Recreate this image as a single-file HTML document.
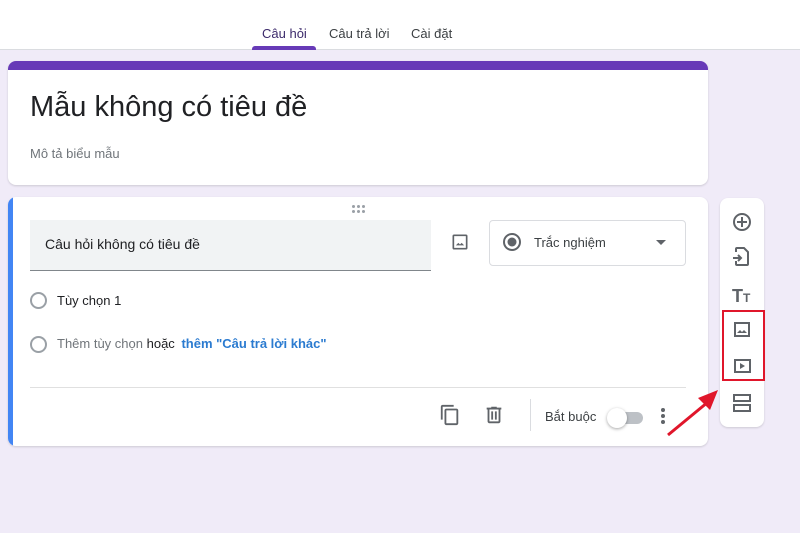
<!DOCTYPE html>
<html><head><meta charset="utf-8"><style>
*{margin:0;padding:0;box-sizing:border-box}
body{width:800px;height:533px;background:#f0ebf8;font-family:"Liberation Sans",sans-serif;position:relative;overflow:hidden;color:#202124}
.hdr{position:absolute;left:0;top:0;width:800px;height:50px;background:#fff;border-bottom:1px solid #dadce0}
.tab{position:absolute;top:26px;font-size:13px;color:#3c4043}
.card{position:absolute;background:#fff;border-radius:8px;box-shadow:0 1px 2px rgba(0,0,0,.15)}
.abs{position:absolute}
.d{position:absolute;width:3px;height:3px;background:#9aa0a6;border-radius:50%}
</style></head><body>
<div class="hdr">
<div class="tab" style="left:262px;color:#3c2a6b">Câu hỏi</div>
<div class="tab" style="left:329px">Câu trả lời</div>
<div class="tab" style="left:411px">Cài đặt</div>
<div class="abs" style="left:252px;top:46px;width:64px;height:4px;background:#673ab7;border-radius:3px 3px 0 0"></div>
</div>
<div class="card" style="left:8px;top:61px;width:700px;height:124px;overflow:hidden">
<div class="abs" style="left:0;top:0;width:700px;height:9px;background:#673ab7"></div>
<div class="abs" style="left:22px;top:30px;font-size:29px;color:#202124">Mẫu không có tiêu đề</div>
<div class="abs" style="left:22px;top:85px;font-size:13px;color:#70757a">Mô tả biểu mẫu</div>
</div>
<div class="card" style="left:8px;top:197px;width:700px;height:249px;overflow:hidden">
<div class="abs" style="left:0;top:0;width:5px;height:249px;background:#4285f4"></div>
<div class="d" style="left:344px;top:8px"></div><div class="d" style="left:349px;top:8px"></div><div class="d" style="left:354px;top:8px"></div>
<div class="d" style="left:344px;top:13px"></div><div class="d" style="left:349px;top:13px"></div><div class="d" style="left:354px;top:13px"></div>
<div class="abs" style="left:22px;top:23px;width:401px;height:51px;background:#f1f3f4;border-bottom:1px solid #80868b"></div>
<div class="abs" style="left:37px;top:39px;font-size:14px">Câu hỏi không có tiêu đề</div>
<svg class="abs" style="left:442px;top:35px" width="20" height="20" viewBox="0 0 24 24"><rect x="4" y="4" width="16" height="16" rx="1" fill="none" stroke="#5f6368" stroke-width="2"/><path d="M7 16l3-3 2 2 2-2 3 3z" fill="#5f6368"/></svg>
<div class="abs" style="left:481px;top:23px;width:197px;height:46px;border:1px solid #dadce0;border-radius:4px"></div>
<svg class="abs" style="left:494px;top:35px" width="20" height="20" viewBox="0 0 20 20"><circle cx="10" cy="10" r="8" fill="none" stroke="#5f6368" stroke-width="2"/><circle cx="10" cy="10" r="4.5" fill="#5f6368"/></svg>
<div class="abs" style="left:526px;top:38px;font-size:13px;color:#3c4043">Trắc nghiệm</div>
<div class="abs" style="left:648px;top:43px;width:0;height:0;border-left:5px solid transparent;border-right:5px solid transparent;border-top:5px solid #5f6368"></div>
<div class="abs" style="left:22px;top:95px;width:17px;height:17px;border:2px solid #9aa0a6;border-radius:50%"></div>
<div class="abs" style="left:49px;top:96px;font-size:13px">Tùy chọn 1</div>
<div class="abs" style="left:22px;top:139px;width:17px;height:17px;border:2px solid #9aa0a6;border-radius:50%"></div>
<div class="abs" style="left:49px;top:139px;font-size:13px;color:#70757a">Thêm tùy chọn <span style="color:#202124">hoặc</span> <span style="color:#2b7bd0;font-weight:bold;margin-left:3px">thêm "Câu trả lời khác"</span></div>
<div class="abs" style="left:22px;top:190px;width:656px;height:1px;background:#e0e0e0"></div>
<svg class="abs" style="left:431px;top:207px" width="22" height="22" viewBox="0 0 24 24"><path d="M16 1H4c-1.1 0-2 .9-2 2v14h2V3h12V1zm3 4H8c-1.1 0-2 .9-2 2v14c0 1.1.9 2 2 2h11c1.1 0 2-.9 2-2V7c0-1.1-.9-2-2-2zm0 16H8V7h11v14z" fill="#5f6368"/></svg>
<svg class="abs" style="left:475px;top:207px" width="22" height="22" viewBox="0 0 24 24"><path d="M15 4V3H9v1H4v2h1v13c0 1.1.9 2 2 2h10c1.1 0 2-.9 2-2V6h1V4h-5zm2 15H7V6h10v13zM9 8h2v9H9zm4 0h2v9h-2z" fill="#5f6368"/></svg>
<div class="abs" style="left:522px;top:202px;width:1px;height:32px;background:#dadce0"></div>
<div class="abs" style="left:537px;top:212px;font-size:13px;color:#3c4043">Bắt buộc</div>
<div class="abs" style="left:603px;top:215px;width:32px;height:12px;background:#bdc1c6;border-radius:6px"></div>
<div class="abs" style="left:599px;top:211px;width:20px;height:20px;background:#fff;border-radius:50%;box-shadow:0 1px 3px rgba(0,0,0,.35)"></div>
<div class="abs" style="left:653px;top:211px;width:4px;line-height:6px;font-size:0"><div style="width:4px;height:4px;background:#5f6368;border-radius:50%;margin-bottom:2px"></div><div style="width:4px;height:4px;background:#5f6368;border-radius:50%;margin-bottom:2px"></div><div style="width:4px;height:4px;background:#5f6368;border-radius:50%"></div></div>
</div>
<div class="card" style="left:720px;top:198px;width:44px;height:229px"></div>
<svg class="abs" style="left:720px;top:198px" width="44" height="229" viewBox="0 0 44 229">
<g fill="none" stroke="#5f6368" stroke-width="2">
<circle cx="22" cy="24" r="8"/><path d="M22 19v10M17 24h10"/>
<path d="M16 54v-3a1 1 0 0 1 1-1h7l4 4v12a1 1 0 0 1-1 1h-10a1 1 0 0 1-1-1v-3M13 60h8M18 57l3 3-3 3"/>
<rect x="15" y="125" width="14" height="13"/>
<rect x="15" y="162" width="15" height="12"/>
<rect x="14" y="197" width="16" height="6"/><rect x="14" y="207" width="16" height="6"/>
</g>
<path d="M17 135l3-3 2 2 2-2 3 3z" fill="#5f6368"/>
<path d="M20 165v6l5-3z" fill="#5f6368"/>
<text x="12" y="104" font-family="Liberation Sans" font-weight="bold" font-size="18" fill="#5f6368">T</text><text x="23" y="104" font-family="Liberation Sans" font-weight="bold" font-size="12" fill="#5f6368">T</text>
</svg>
<div class="abs" style="left:722px;top:310px;width:43px;height:71px;border:2px solid #e0162b"></div>
<svg class="abs" style="left:660px;top:380px" width="70" height="60"><path d="M8 55L48 22" stroke="#e0162b" stroke-width="3"/><path d="M58 10L38 18L50 30z" fill="#e0162b"/></svg>
</body></html>
